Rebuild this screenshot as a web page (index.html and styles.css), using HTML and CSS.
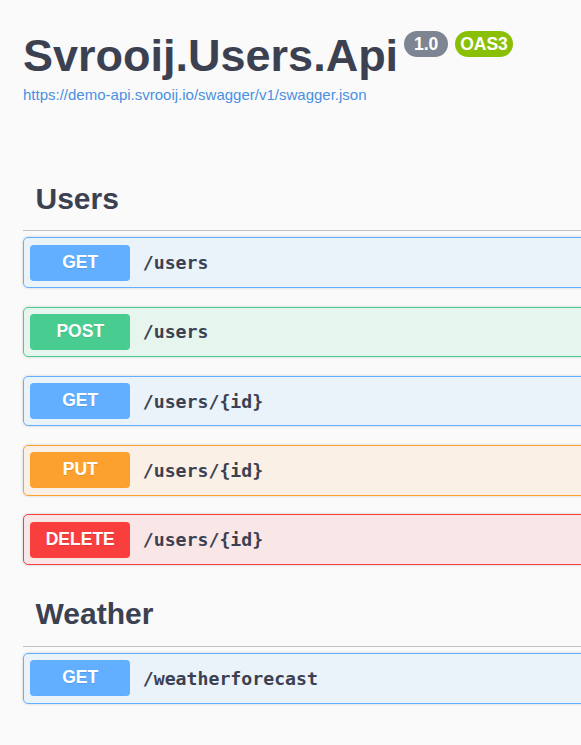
FILE: index.html
```html
<!DOCTYPE html>
<html lang="en">
<head>
<meta charset="utf-8">
<title>Svrooij.Users.Api</title>
<link rel="stylesheet" href="styles.css">
</head>
<body>
<div class="wrapper">
  <section class="info">
    <h1 class="title">
      <span class="title-text">Svrooij.Users.Api</span>
      <small class="badge badge-version"><pre> 1.0 </pre></small>
      <small class="badge badge-oas"><pre>OAS3</pre></small>
    </h1>
    <a class="spec-link" href="#">https://demo-api.svrooij.io/swagger/v1/swagger.json</a>
  </section>

  <section class="tag-section">
    <h3 class="tag-header"><span>Users</span></h3>
    <div class="opblock op-get"><span class="method">GET</span><span class="path">/users</span></div>
    <div class="opblock op-post"><span class="method">POST</span><span class="path">/users</span></div>
    <div class="opblock op-get"><span class="method">GET</span><span class="path">/users/{id}</span></div>
    <div class="opblock op-put"><span class="method">PUT</span><span class="path">/users/{id}</span></div>
    <div class="opblock op-delete"><span class="method">DELETE</span><span class="path">/users/{id}</span></div>
  </section>

  <section class="tag-section">
    <h3 class="tag-header"><span>Weather</span></h3>
    <div class="opblock op-get"><span class="method">GET</span><span class="path">/weatherforecast</span></div>
  </section>
</div>
</body>
</html>
```

FILE: styles.css
```css
html, body {
  margin: 0;
  padding: 0;
}

body {
  background: #fafafa;
  font-family: "Liberation Sans", Arial, sans-serif;
  color: #3b4151;
  overflow: hidden;
}

.wrapper {
  width: 820px;
  padding: 29px 0 0 23px;
}

.info {
  margin-bottom: 62px;
}

.title {
  display: flex;
  align-items: flex-start;
  margin: 0;
  font-size: 45px;
  line-height: 54px;
  font-weight: bold;
  color: #3b4151;
}

.badge {
  margin: 2px 0 0 7px;
  padding: 2.5px 5px;
  border-radius: 57px;
  font-size: 17.5px;
  line-height: 21px;
  font-weight: bold;
}

.badge-version {
  margin-left: 6px;
}

.badge pre {
  margin: 0;
  font-family: "Liberation Sans", Arial, sans-serif;
  color: #fff;
  white-space: pre;
}

.badge-version {
  background: #7d8492;
}

.badge-oas {
  background: #89bf04;
}

.spec-link {
  display: block;
  margin-top: 3px;
  font-size: 15px;
  line-height: 18px;
  color: #4990e2;
  text-decoration: none;
}

.tag-header {
  margin: 0 0 6.25px;
  padding: 12.5px 25px 12.5px 12.5px;
  border-bottom: 1px solid rgba(59, 65, 81, 0.3);
  font-size: 30px;
  line-height: 39px;
  font-weight: bold;
  color: #3b4151;
}

.opblock {
  display: flex;
  align-items: center;
  margin-bottom: 18.75px;
  padding: 6.25px;
  border: 1px solid;
  border-radius: 5px;
  box-shadow: 0 0 3px rgba(0, 0, 0, 0.19);
}

.opblock:last-child {
  margin-bottom: 17px;
}

.method {
  box-sizing: border-box;
  width: 100px;
  height: 36px;
  padding-bottom: 1px;
  line-height: 35px;
  text-align: center;
  border-radius: 3.75px;
  font-size: 17.5px;
  font-weight: bold;
  color: #fff;
  text-shadow: 0 1px 0 rgba(0, 0, 0, 0.1);
}

.path {
  padding: 0 12.5px;
  font-family: "DejaVu Sans Mono", "Liberation Mono", monospace;
  font-size: 18.2px;
  font-weight: 600;
  color: #3b4151;
}

.op-get {
  border-color: #61affe;
  background: rgba(97, 175, 254, 0.1);
}
.op-get .method { background: #61affe; }

.op-post {
  border-color: #49cc90;
  background: rgba(73, 204, 144, 0.1);
}
.op-post .method { background: #49cc90; }

.op-put {
  border-color: #fca130;
  background: rgba(252, 161, 48, 0.1);
}
.op-put .method { background: #fca130; }

.op-delete {
  border-color: #f93e3e;
  background: rgba(249, 62, 62, 0.1);
}
.op-delete .method { background: #f93e3e; }
```
